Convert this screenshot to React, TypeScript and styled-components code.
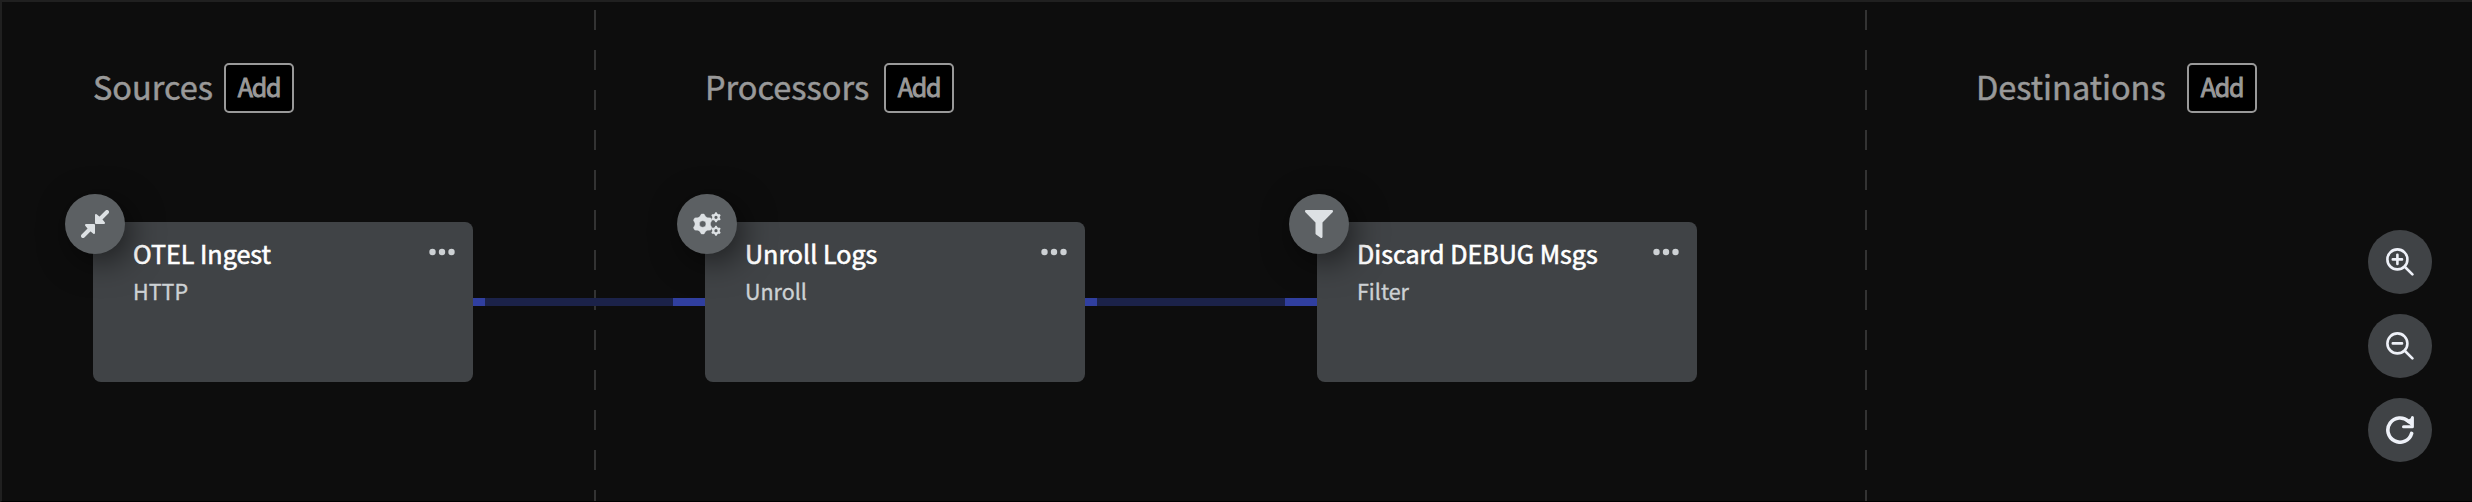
import React from "react";
import styled, { createGlobalStyle } from "styled-components";

const GlobalStyle = createGlobalStyle`
  * { box-sizing: border-box; }
  body {
    margin: 0;
    background: #0d0d0d;
    font-family: "Noto Sans CJK SC", "Noto Sans", sans-serif;
  }
`;

const Board = styled.main`
  position: relative;
  display: grid;
  grid-template-columns: 592px 1271px 1fr;
  width: 2472px;
  height: 502px;
  overflow: hidden;
  background: #0d0d0d;
  border-top: 2px solid #202020;
  border-left: 2px solid #202020;
  border-bottom: 1px solid #000;
`;

const Lane = styled.section<{ $inset: number; $divided?: boolean }>`
  padding: 61px 0 0 ${(p) => p.$inset}px;
  background: ${(p) =>
    p.$divided
      ? "repeating-linear-gradient(to bottom, transparent 0 8px, #333 8px 28px, transparent 28px 40px) left top / 2px 100% no-repeat"
      : "none"};
`;

const LaneHeader = styled.header<{ $title: number }>`
  display: grid;
  grid-template-columns: ${(p) => p.$title}px 70px;
  align-items: start;
  height: 50px;
`;

const LaneTitle = styled.h2`
  margin: 0;
  color: #999;
  font-size: 32.5px;
  font-weight: 400;
  line-height: 46px;
  white-space: nowrap;
  -webkit-text-stroke: 0.5px currentColor;
`;

const AddButton = styled.button`
  width: 70px;
  height: 50px;
  padding: 0 0 4px;
  color: #999;
  background: #000;
  border: 2px solid #999;
  border-radius: 5px;
  font-family: inherit;
  font-size: 25px;
  line-height: 42px;
  letter-spacing: -1.2px;
  -webkit-text-stroke: 0.9px currentColor;
`;

const Node = styled.article<{ $x: number }>`
  position: absolute;
  left: ${(p) => p.$x}px;
  top: 220px;
  width: 380px;
  height: 160px;
  padding: 12px 18px 0 40px;
  background: #404346;
  border-radius: 8px;
`;

const Badge = styled.div`
  position: absolute;
  left: -28px;
  top: -28px;
  display: grid;
  place-items: center;
  width: 60px;
  height: 60px;
  color: #dde1e4;
  background: #5c6063;
  border-radius: 50%;
  box-shadow: 6px 8px 32px rgba(0, 0, 0, 0.55);
`;

const NodeHead = styled.div`
  display: flex;
  justify-content: space-between;
`;

const NodeTitle = styled.h3`
  margin: 0;
  color: #fff;
  font-size: 25.1px;
  font-weight: 400;
  line-height: 38px;
  white-space: nowrap;
  -webkit-text-stroke: 0.6px currentColor;
`;

const NodeKind = styled.p`
  margin: 0;
  color: #cdd1d4;
  font-size: 21.5px;
  line-height: 37px;
  -webkit-text-stroke: 0.35px currentColor;
`;

const Dots = styled.svg`
  display: block;
  margin-top: 14px;
`;

const Edge = styled.div<{ $x: number }>`
  position: absolute;
  left: ${(p) => p.$x}px;
  top: 296px;
  width: 232px;
  height: 8px;
  background: linear-gradient(to right, #303f9f 0 12px, #1b2249 12px 200px, #303f9f 200px);
`;

const Controls = styled.nav`
  position: absolute;
  right: 40px;
  bottom: 39px;
  display: grid;
  gap: 20px;
`;

const ControlButton = styled.button`
  display: grid;
  place-items: center;
  width: 64px;
  height: 64px;
  padding: 0;
  color: #eef1f8;
  background: #404346;
  border: 0;
  border-radius: 50%;
`;

const CollapseIcon = () => (
  <svg width="28" height="28" viewBox="0 0 28 28" fill="currentColor" stroke="currentColor">
    <path d="M2 26L8.5 19.5M26 2L19.5 8.5" strokeWidth="4" strokeLinecap="round" />
    <path d="M5 15H13V23L10 20.5L7.5 18ZM23 13H15V5L18 7.5L20.5 10Z" strokeWidth="2" strokeLinejoin="round" />
  </svg>
);

const gear = (cx: number, cy: number, outer: number, inner: number, teeth: number) => {
  const steps = teeth * 4;
  return (
    Array.from({ length: steps }, (_, i) => {
      const a = ((i - 0.5) / steps) * Math.PI * 2 - Math.PI / 2;
      const r = i % 4 < 2 ? outer : inner;
      return `${i ? "L" : "M"}${(cx + r * Math.cos(a)).toFixed(2)} ${(cy + r * Math.sin(a)).toFixed(2)}`;
    }).join("") + "Z"
  );
};

const ring = (cx: number, cy: number, r: number) =>
  `M${cx - r} ${cy}a${r} ${r} 0 1 0 ${2 * r} 0a${r} ${r} 0 1 0 ${-2 * r} 0Z`;

const GearsIcon = () => (
  <svg width="28" height="24" viewBox="0 0 28 24" fill="currentColor" fillRule="evenodd">
    <path d={gear(9.7, 12, 10, 7.8, 6) + ring(9.7, 12, 3.3)} stroke="currentColor" strokeWidth="0.5" strokeLinejoin="round" />
    <path d={gear(23, 5.3, 5, 3.8, 6) + ring(23, 5.3, 1.6)} />
    <path d={gear(23, 18.7, 5, 3.8, 6) + ring(23, 18.7, 1.6)} />
  </svg>
);

const FunnelIcon = () => (
  <svg width="28" height="28" viewBox="0 0 28 28" fill="currentColor">
    <path d="M1.3 0H26.7C27.9 0 28.5 1.4 27.6 2.3L17.5 12.4V26.7C17.5 27.7 16.4 28.3 15.6 27.7L11 24.5C10.7 24.2 10.5 23.9 10.5 23.5V12.4L.4 2.3C-.5 1.4 .1 0 1.3 0Z" />
  </svg>
);

const ZoomIcon = ({ plus }: { plus?: boolean }) => (
  <svg width="28" height="28" viewBox="0 0 28 28" fill="none" stroke="currentColor" strokeWidth="2.6" strokeLinecap="round">
    <circle cx="11.4" cy="11.4" r="10" />
    <path d="M19 19L26.4 26.4M6.8 11.4H16" />
    {plus && <path d="M11.4 6.8V16" />}
  </svg>
);

const ReloadIcon = () => (
  <svg width="28" height="28" viewBox="0 0 28 28" fill="none" stroke="currentColor">
    <path d="M25.6 17.4A12.1 12.1 0 1 1 22.6 5.6" strokeWidth="3.6" strokeLinecap="round" />
    <path d="M26.4 1.5V10.8H17.5" strokeWidth="3" strokeLinecap="round" strokeLinejoin="round" />
    <path d="M20 5L26 10.5V1.5Z" fill="currentColor" stroke="none" />
  </svg>
);

const lanes = [
  { title: "Sources", inset: 91, width: 131 },
  { title: "Processors", inset: 111, width: 179, divided: true },
  { title: "Destinations", inset: 111, width: 211, divided: true },
];

const nodes = [
  { x: 91, title: "OTEL Ingest", kind: "HTTP", icon: <CollapseIcon /> },
  { x: 703, title: "Unroll Logs", kind: "Unroll", icon: <GearsIcon /> },
  { x: 1315, title: "Discard DEBUG Msgs", kind: "Filter", icon: <FunnelIcon /> },
];

export default function App() {
  return (
    <Board>
      <GlobalStyle />
      {lanes.map((l) => (
        <Lane key={l.title} $inset={l.inset} $divided={l.divided}>
          <LaneHeader $title={l.width}>
            <LaneTitle>{l.title}</LaneTitle>
            <AddButton>Add</AddButton>
          </LaneHeader>
        </Lane>
      ))}
      <Edge $x={471} />
      <Edge $x={1083} />
      {nodes.map((n) => (
        <Node key={n.title} $x={n.x}>
          <NodeHead>
            <NodeTitle>{n.title}</NodeTitle>
            <Dots width="26" height="8" viewBox="0 0 26 8" fill="#cdd1d4">
              <circle cx="3.5" cy="4" r="3.2" />
              <circle cx="13" cy="4" r="3.2" />
              <circle cx="22.5" cy="4" r="3.2" />
            </Dots>
          </NodeHead>
          <NodeKind>{n.kind}</NodeKind>
          <Badge>{n.icon}</Badge>
        </Node>
      ))}
      <Controls>
        <ControlButton aria-label="Zoom in"><ZoomIcon plus /></ControlButton>
        <ControlButton aria-label="Zoom out"><ZoomIcon /></ControlButton>
        <ControlButton aria-label="Reset view"><ReloadIcon /></ControlButton>
      </Controls>
    </Board>
  );
}
